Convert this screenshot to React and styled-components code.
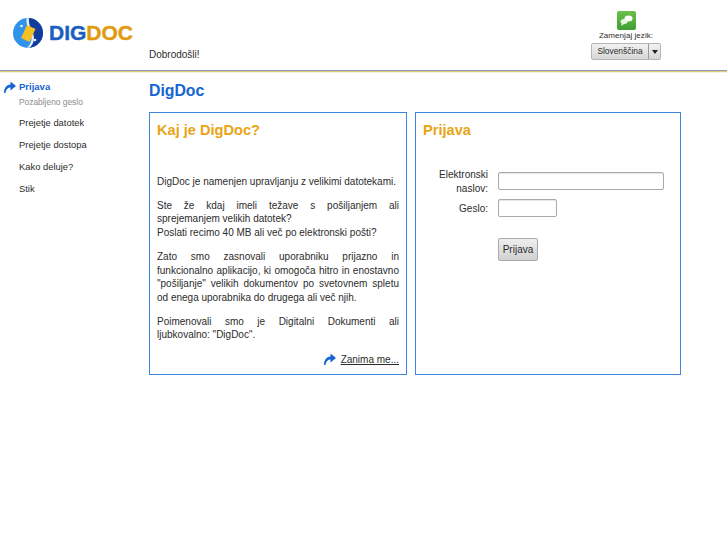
import React from 'react';
import styled, { createGlobalStyle } from 'styled-components';

const GlobalStyle = createGlobalStyle`
  html, body { margin: 0; padding: 0; background: #fff; }
  body { font-family: "Liberation Sans", Arial, sans-serif; font-size: 10px; color: #2c2c2c; }
`;

const Page = styled.div`
  width: 727px;
  height: 545px;
  overflow: hidden;
`;

const Header = styled.header`
  height: 70px;
  display: flex;
  border-bottom: 1px solid #8a9ab0;
  box-shadow: 0 1px 0 #e8c683, 0 2px 0 #f8f2e4;
`;

const LogoBox = styled.div`
  width: 149px;
  box-sizing: border-box;
  height: 48px;
  padding: 17px 0 0 13px;
  display: flex;
  align-items: center;
  gap: 6px;
`;

const LogoWord = styled.span`
  font-weight: 700;
  font-size: 21px;
  -webkit-text-stroke: 0.4px currentColor;
  color: #1a5fc0;
  & > b { color: #e29b10; font-weight: 700; }
`;

const Welcome = styled.div`
  width: 442px;
  padding-top: 49px;
`;

const LangBox = styled.div`
  width: 70px;
  display: flex;
  flex-direction: column;
  align-items: center;
  padding-top: 11px;
`;

const LangIcon = styled.div`
  width: 19px;
  height: 19px;
  border-radius: 2px;
  background: linear-gradient(#6cc04a, #3f9e35);
  display: flex;
  align-items: center;
  justify-content: center;
`;

const LangLabel = styled.div`
  font-size: 8px;
  line-height: 11px;
  letter-spacing: 0.05px;
`;

const LangSelect = styled.div`
  margin-top: 2px;
  box-sizing: border-box;
  width: 70px;
  display: flex;
  height: 17px;
  border: 1px solid #b5b5b5;
  border-radius: 2px;
  background: linear-gradient(#f2f2f2, #d6d6d6);
  font-size: 8.4px;
  line-height: 15px;
`;

const LangValue = styled.span`
  width: 56px;
  text-align: center;
  border-right: 1px solid #9a9a9a;
`;

const LangArrow = styled.span`
  flex: 1;
  display: flex;
  align-items: center;
  justify-content: center;
  &::before {
    content: "";
    border: 3.5px solid transparent;
    border-top: 4px solid #222;
    border-bottom: 0;
  }
`;

const Body = styled.div`
  display: flex;
`;

const Sidebar = styled.nav`
  width: 149px;
  padding-top: 5px;
  flex: none;
`;

const NavItem = styled.div`
  position: relative;
  padding-left: 19px;
  height: ${p => (p.$sub ? '16px' : p.$active ? '20px' : '22px')};
  line-height: ${p => (p.$sub ? '12px' : '22px')};
  font-size: ${p => (p.$sub ? '8.4px' : p.$active ? '9.5px' : '9.4px')};
  font-weight: ${p => (p.$active ? 700 : 400)};
  color: ${p => (p.$active ? '#1464d2' : p.$sub ? '#8c8c8c' : '#2c2c2c')};
  & > svg { position: absolute; left: 4px; top: 5px; }
`;

const Main = styled.main`
  width: 533px;
`;

const PageTitle = styled.h1`
  margin: 9px 0 0;
  font-size: 15.8px;
  line-height: 22px;
  color: #1464d2;
`;

const Cards = styled.div`
  display: flex;
  gap: 8px;
  margin-top: 10px;
`;

const Card = styled.section`
  box-sizing: border-box;
  width: ${p => p.$w}px;
  height: 263px;
  border: 1px solid #3f86dd;
  padding: 7px 7px;
`;

const CardTitle = styled.h2`
  margin: 0;
  font-size: 14.6px;
  line-height: 20px;
  color: #e9a514;
`;

const Intro = styled.div`
  margin-top: 35px;
  line-height: 13.7px;
  text-align: justify;
  & p { margin: 0 0 10px; }
`;

const MoreRow = styled.div`
  display: flex;
  justify-content: flex-end;
  align-items: center;
  gap: 4px;
  margin-top: 11px;
  & a { color: #2c2c2c; text-decoration: underline; }
  & > svg { margin-right: 1px; }
`;

const LoginForm = styled.form`
  margin-top: 27px;
  display: grid;
  grid-template-columns: 65px 1fr;
  column-gap: 10px;
  line-height: 13.7px;
`;

const FieldLabel = styled.label`
  text-align: right;
  padding-top: ${p => p.$pt || 0}px;
`;

const TextInput = styled.input`
  box-sizing: border-box;
  display: block;
  width: ${p => p.$w}px;
  height: 18px;
  border: 1px solid #aaa;
  border-radius: 2px;
  box-shadow: inset 0 1px 1px #e6e6e6;
  background: #fff;
  margin-top: ${p => p.$mt || 0}px;
`;

const SubmitButton = styled.button`
  grid-column: 2;
  justify-self: start;
  margin-top: 21px;
  width: 40px;
  height: 23px;
  padding: 0;
  border: 1px solid #aaa;
  border-radius: 2px;
  background: linear-gradient(#efefef, #d0d0d0);
  font: inherit;
  color: #2c2c2c;
`;

const Arrow = () => (
  <svg width="12" height="12" viewBox="0 0 12 12">
    <path d="M0 12 C0 7 2.5 3.8 6.5 3.5 V0.5 L12 5 L6.5 9.5 V6.6 C4 6.6 2.5 8 1.5 12 Z" fill="#1464d2" />
  </svg>
);

const App = () => (
  <Page>
    <GlobalStyle />
    <Header>
      <LogoBox>
        <svg width="30" height="30" viewBox="0 0 30 30">
          <circle cx="15" cy="15" r="15" fill="#2f93ea" />
          <path d="M15 0 A15 15 0 0 1 15 30 C21 24 22 20 19 14 C17 9 15 5 15 0 Z" fill="#123c9e" />
          <path d="M13.5 0.2 C13 6 15 10 17 14.5 C19.5 20 19 25 14 29.8 L16.5 29.8 C21.5 25 22 20 19.5 14 C17.5 9.5 15.5 6 16 0.2 Z" fill="#dff1ff" />
          <path d="M14 7 L22.5 11 L16.5 24 L8 20 Z" fill="#f6bf22" />
          <circle cx="8.5" cy="8" r="1.3" fill="#eaf6ff" />
          <circle cx="22" cy="22" r="1.3" fill="#eaf6ff" />
        </svg>
        <LogoWord>DIG<b>DOC</b></LogoWord>
      </LogoBox>
      <Welcome>Dobrodošli!</Welcome>
      <LangBox>
        <LangIcon>
          <svg width="13" height="11" viewBox="0 0 13 11">
            <ellipse cx="8.5" cy="3.5" rx="4" ry="3" fill="#fff" />
            <ellipse cx="4" cy="6.5" rx="3.5" ry="2.5" fill="#e8f5e0" />
            <path d="M2 8 L1 11 L5 8.5 Z" fill="#e8f5e0" />
          </svg>
        </LangIcon>
        <LangLabel>Zamenjaj jezik:</LangLabel>
        <LangSelect>
          <LangValue>Slovenščina</LangValue>
          <LangArrow />
        </LangSelect>
      </LangBox>
    </Header>
    <Body>
      <Sidebar>
        <NavItem $active><Arrow />Prijava</NavItem>
        <NavItem $sub>Pozabljeno geslo</NavItem>
        <NavItem>Prejetje datotek</NavItem>
        <NavItem>Prejetje dostopa</NavItem>
        <NavItem>Kako deluje?</NavItem>
        <NavItem>Stik</NavItem>
      </Sidebar>
      <Main>
        <PageTitle>DigDoc</PageTitle>
        <Cards>
          <Card $w={258}>
            <CardTitle>Kaj je DigDoc?</CardTitle>
            <Intro>
              <p>DigDoc je namenjen upravljanju z velikimi datotekami.</p>
              <p>Ste že kdaj imeli težave s pošiljanjem ali sprejemanjem velikih datotek?<br />Poslati recimo 40 MB ali več po elektronski pošti?</p>
              <p>Zato smo zasnovali uporabniku prijazno in funkcionalno aplikacijo, ki omogoča hitro in enostavno "pošiljanje" velikih dokumentov po svetovnem spletu od enega uporabnika do drugega ali več njih.</p>
              <p>Poimenovali smo je Digitalni Dokumenti ali ljubkovalno: "DigDoc".</p>
            </Intro>
            <MoreRow><Arrow /><a>Zanima me...</a></MoreRow>
          </Card>
          <Card $w={266}>
            <CardTitle>Prijava</CardTitle>
            <LoginForm>
              <FieldLabel $pt={1}>Elektronski naslov:</FieldLabel>
              <TextInput $w={166} $mt={5} />
              <FieldLabel $pt={7}>Geslo:</FieldLabel>
              <TextInput $w={59} $mt={4} />
              <SubmitButton type="button">Prijava</SubmitButton>
            </LoginForm>
          </Card>
        </Cards>
      </Main>
    </Body>
  </Page>
);

export default App;
